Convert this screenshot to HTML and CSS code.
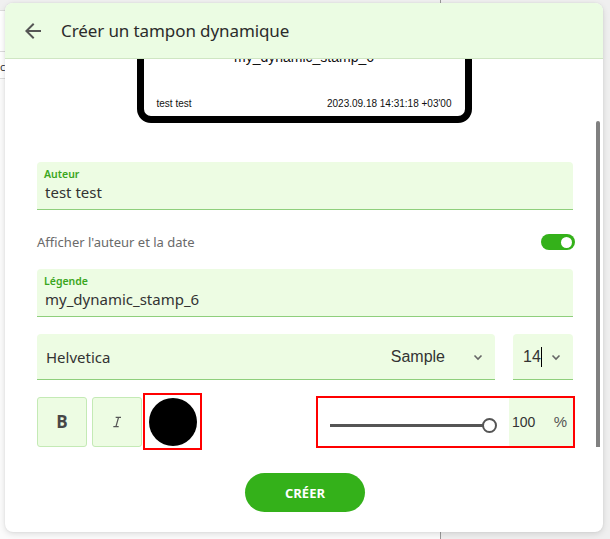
FILE: index.html
```html
<!DOCTYPE html>
<html lang="fr">
<head>
    <meta charset="UTF-8">
    <meta name="viewport" content="width=device-width, initial-scale=1.0">
    <title>Créer un tampon dynamique</title>
    <link rel="stylesheet" href="styles.css">
</head>
<body>
    <div class="backdrop">
        <div class="page-left">
            <div class="page-top"></div>
            <div class="page-row"></div>
            <div class="page-row short">c</div>
        </div>
        <div class="page-right"></div>
    </div>

    <div class="dialog">
        <div class="dialog-header">
            <button class="back-btn" aria-label="Retour">
                <svg width="24" height="24" viewBox="0 0 24 24"><path d="M20 11H7.83l5.59-5.59L12 4l-8 8 8 8 1.41-1.41L7.83 13H20v-2z" fill="#555"/></svg>
            </button>
            <h1>Créer un tampon dynamique</h1>
        </div>
        <div class="dialog-body">
            <div class="scroll">
                <div class="stamp">
                    <div class="stamp-name">my_dynamic_stamp_6</div>
                    <div class="stamp-foot">
                        <span>test test</span>
                        <span>2023.09.18 14:31:18 +03'00</span>
                    </div>
                </div>

                <div class="field">
                    <label>Auteur</label>
                    <div class="field-value">test test</div>
                </div>

                <div class="toggle-row">
                    <span>Afficher l'auteur et la date</span>
                    <span class="switch"><span class="knob"></span></span>
                </div>

                <div class="field">
                    <label>Légende</label>
                    <div class="field-value">my_dynamic_stamp_6</div>
                </div>

                <div class="font-row">
                    <div class="select font-select">
                        <span class="font-name">Helvetica</span>
                        <span class="sample">Sample</span>
                        <svg class="chev" width="12" height="12" viewBox="0 0 12 12"><path d="M2.5 4.5 6 8l3.5-3.5" fill="none" stroke="#666" stroke-width="1.6"/></svg>
                    </div>
                    <div class="select size-select">
                        <span class="size-val">14<span class="caret"></span></span>
                        <svg class="chev" width="12" height="12" viewBox="0 0 12 12"><path d="M2.5 4.5 6 8l3.5-3.5" fill="none" stroke="#666" stroke-width="1.6"/></svg>
                    </div>
                </div>

                <div class="style-row">
                    <div class="style-left">
                        <button class="fmt-btn bold">B</button>
                        <button class="fmt-btn">
                            <svg width="16" height="16" viewBox="0 0 24 24"><path d="M10 4v2h3.1l-3.4 12H6.5v2h8v-2h-2.9l3.4-12h3V4z" fill="#555"/></svg>
                        </button>
                        <div class="color-pick"><span class="swatch"></span></div>
                    </div>
                    <div class="opacity">
                        <div class="slider">
                            <div class="track"></div>
                            <div class="thumb"></div>
                        </div>
                        <div class="opacity-input">
                            <span>100</span>
                            <span class="pct">%</span>
                        </div>
                    </div>
                </div>

                <div class="actions">
                    <button class="create-btn">CRÉER</button>
                </div>
            </div>
            <div class="scrollbar"></div>
        </div>
    </div>
</body>
</html>
```

FILE: styles.css
```css
body {
    margin: 0;
    width: 610px;
    height: 539px;
    overflow: hidden;
    font-family: "Noto Sans", "Open Sans", sans-serif;
    background-color: #f2f2f2;
    position: relative;
}
.backdrop {
    display: flex;
    height: 539px;
}
.page-left {
    width: 440px;
    background-color: #fbfbfb;
    border-right: 1px solid #999;
}
.page-right {
    flex: 1;
    background-color: #efefef;
}
.page-top {
    height: 10px;
    background-color: #f0f0f0;
    border-bottom: 1px solid #dcdcdc;
}
.page-row {
    height: 40px;
    border-bottom: 1px solid #dcdcdc;
    background-color: #fff;
}
.page-row.short {
    height: 26px;
    line-height: 30px;
    font-size: 11px;
    color: #333;
    padding-left: 0;
}
.dialog {
    position: absolute;
    left: 5px;
    top: 3px;
    width: 598px;
    height: 529px;
    background-color: #fff;
    border-radius: 8px;
    box-shadow: 0 2px 6px rgba(0, 0, 0, 0.12), 0 0 2px rgba(0, 0, 0, 0.08);
    overflow: hidden;
    display: flex;
    flex-direction: column;
}
.dialog-header {
    height: 55px;
    flex-shrink: 0;
    background-color: #ebfce3;
    border-bottom: 1px solid #cfe6c3;
    display: flex;
    align-items: center;
    padding-left: 16px;
}
.back-btn {
    border: none;
    background: none;
    padding: 0;
    width: 24px;
    height: 24px;
    cursor: pointer;
}
.dialog-header h1 {
    margin: 0 0 0 16px;
    font-size: 17px;
    font-weight: normal;
    color: #2b2b2b;
    letter-spacing: -0.1px;
}
.dialog-body {
    flex: 1;
    position: relative;
    overflow: hidden;
}
.scroll {
    padding: 0 30px 0 32px;
    margin-top: -36px;
}
.stamp {
    width: 321px;
    height: 86px;
    margin: 0 auto;
    border: 7px solid #000;
    border-radius: 14px;
    display: flex;
    flex-direction: column;
    justify-content: space-between;
    font-family: "Liberation Sans", Arial, sans-serif;
    color: #111;
    position: relative;
    left: -1px;
}
.stamp-name {
    text-align: center;
    font-size: 14px;
    padding-top: 19px;
}
.stamp-foot {
    display: flex;
    justify-content: space-between;
    font-size: 10px;
    padding: 0 13px 7px 13px;
}
.field {
    margin-top: 39px;
    background-color: #edfce3;
    border-bottom: 1px solid #8fcf7c;
    border-radius: 4px 4px 0 0;
    padding: 5px 8px 0 7px;
    box-sizing: border-box;
    height: 48px;
}
.field label {
    display: block;
    font-size: 10.5px;
    font-weight: 600;
    color: #3aa620;
    line-height: 14px;
}
.field-value {
    font-size: 15px;
    color: #333;
    padding-left: 1px;
    line-height: 22px;
}
.toggle-row + .field {
    margin-top: 0;
}
.toggle-row {
    height: 59px;
    box-sizing: border-box;
    padding-top: 5px;
    display: flex;
    align-items: center;
    justify-content: space-between;
    font-size: 13px;
    color: #6a6a6a;
    margin-right: -2px;
}
.switch {
    width: 34px;
    height: 16px;
    border-radius: 8px;
    background-color: #34b11a;
    display: flex;
    align-items: center;
    justify-content: flex-end;
    padding-right: 3px;
    box-sizing: border-box;
}
.knob {
    width: 11px;
    height: 11px;
    border-radius: 50%;
    background-color: #fff;
}
.font-row {
    margin-top: 17px;
    display: flex;
    gap: 18px;
}
.select {
    height: 46px;
    background-color: #edfce3;
    border-bottom: 1px solid #8fcf7c;
    border-radius: 4px 4px 0 0;
    display: flex;
    align-items: center;
    box-sizing: border-box;
    font-size: 15px;
    color: #333;
}
.font-select {
    flex: 1;
    padding: 0 11px 0 9px;
}
.font-name {
    flex: 1;
}
.sample {
    font-family: "Liberation Sans", Arial, sans-serif;
    font-size: 16px;
    margin-right: 27px;
}
.size-select {
    width: 60px;
    padding: 0 11px 0 10px;
    justify-content: space-between;
    font-family: "Liberation Sans", Arial, sans-serif;
    font-size: 16px;
}
.size-val {
    display: flex;
    align-items: center;
}
.caret {
    width: 1px;
    height: 20px;
    background-color: #000;
}
.style-row {
    display: flex;
    justify-content: space-between;
    align-items: center;
    margin-top: 13px;
    margin-right: -2px;
}
.style-left {
    display: flex;
    align-items: center;
    gap: 5px;
}
.fmt-btn {
    width: 50px;
    height: 50px;
    box-sizing: border-box;
    background-color: #edfce3;
    border: 1px solid #c4eab5;
    border-radius: 3px;
    display: flex;
    align-items: center;
    justify-content: center;
    padding: 0;
    font-family: "Open Sans", sans-serif;
    font-size: 17px;
    font-weight: bold;
    color: #474747;
}
.color-pick {
    width: 59px;
    height: 57px;
    box-sizing: border-box;
    border: 2px solid #f00;
    margin-left: -4px;
    display: flex;
    align-items: center;
    justify-content: center;
}
.swatch {
    width: 48px;
    height: 48px;
    border-radius: 50%;
    background-color: #000;
}
.opacity {
    width: 259px;
    height: 52px;
    box-sizing: border-box;
    border: 2px solid #f00;
    display: flex;
}
.slider {
    flex: 1;
    position: relative;
}
.track {
    position: absolute;
    left: 12px;
    right: 20px;
    top: 26px;
    height: 3px;
    background-color: #555;
}
.thumb {
    position: absolute;
    right: 12px;
    top: 20px;
    width: 15px;
    height: 15px;
    box-sizing: border-box;
    border: 2px solid #555;
    border-radius: 50%;
    background-color: #fff;
}
.opacity-input {
    width: 64px;
    background-color: #edfce3;
    display: flex;
    align-items: center;
    justify-content: space-between;
    padding: 0 6px 0 3px;
    box-sizing: border-box;
    font-family: "Liberation Sans", Arial, sans-serif;
    font-size: 14px;
    color: #333;
}
.pct {
    font-size: 15px;
    color: #555;
}
.actions {
    display: flex;
    justify-content: center;
    margin-top: 23px;
}
.create-btn {
    width: 120px;
    height: 39px;
    border: none;
    border-radius: 20px;
    background-color: #34b11a;
    color: #fff;
    font-family: "Open Sans", sans-serif;
    font-weight: bold;
    font-size: 13px;
    cursor: pointer;
}
.scrollbar {
    position: absolute;
    right: 3px;
    top: 62px;
    width: 4px;
    height: 326px;
    background-color: #808080;
    border-radius: 2px 2px 0 0;
}
```
